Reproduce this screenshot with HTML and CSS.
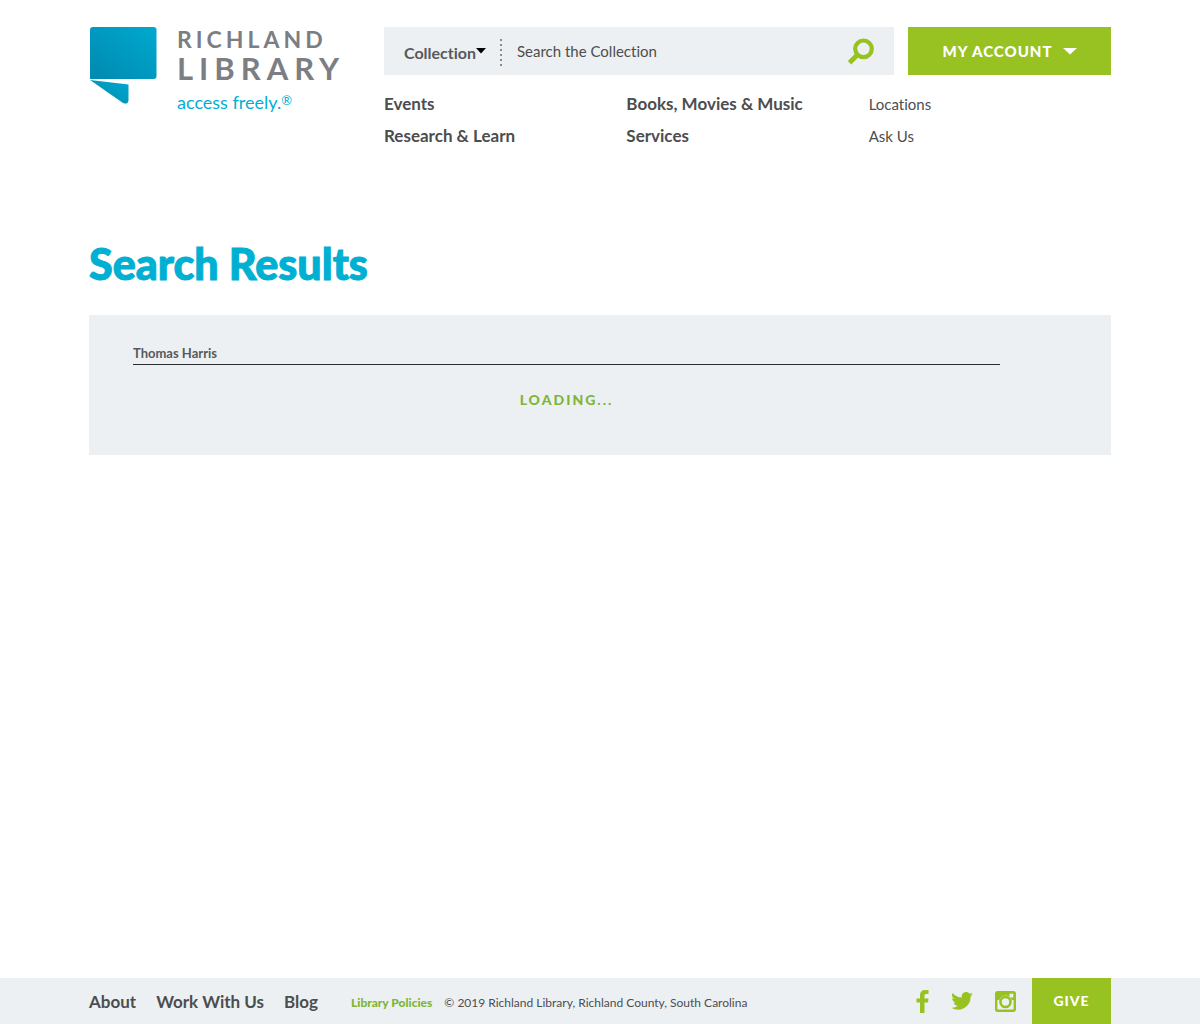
FILE: index.html
```html
<!DOCTYPE html>
<html lang="en">
<head>
<meta charset="utf-8">
<meta name="viewport" content="width=device-width, initial-scale=1">
<title>Search Results | Richland Library</title>
<link rel="stylesheet" href="styles.css">
</head>
<body>
<header class="site-header">
  <a class="logo" href="#">
    <svg class="logo-mark" viewBox="0 0 67 77" aria-hidden="true">
      <defs>
        <linearGradient id="mark" x1="1" y1="0" x2="0" y2="1">
          <stop offset="0" stop-color="#00a9cf"/>
          <stop offset="1" stop-color="#0089b0"/>
        </linearGradient>
      </defs>
      <path fill="url(#mark)" d="M3 0H63.500Q66.500 0 66.500 3V49Q66.500 52 63.500 52H0V3Q0 0 3 0Z"/>
      <path fill="url(#mark)" d="M0 53L38.500 57.500V73.500Q38 78 33 76Z"/>
    </svg>
    <span class="logo-text">
      <span class="logo-top">RICHLAND</span>
      <span class="logo-main">LIBRARY</span>
      <span class="logo-tag">access freely.<span class="logo-reg">®</span></span>
    </span>
  </a>
  <div class="header-main">
    <div class="header-bar">
      <form class="search" role="search">
        <div class="scope">
          <select class="scope-select" aria-label="Search in">
            <option>Collection</option>
            <option>Website</option>
          </select>
          <svg class="scope-caret" viewBox="0 0 10 6" aria-hidden="true"><path d="M0 0H10L5 5.500Z"/></svg>
        </div>
        <svg class="search-divider" viewBox="0 0 2 28" aria-hidden="true"><path d="M1 0V28" stroke="#8a8c8e" stroke-width="2" stroke-dasharray="2 3"/></svg>
        <input class="search-input" type="text" placeholder="Search the Collection" aria-label="Search the Collection">
        <button class="search-button" type="submit" aria-label="Search">
          <svg class="search-icon" viewBox="0 0 27 27" aria-hidden="true"><g fill="none" stroke="#98c222"><circle cx="16.500" cy="10.800" r="8.300" stroke-width="4.200"/><path d="M10.500 16.800L2.500 24.800" stroke-width="4.800"/></g></svg>
        </button>
      </form>
      <button class="account" type="button">MY ACCOUNT
        <svg class="account-caret" viewBox="0 0 14 7" aria-hidden="true"><path fill="#fff" d="M0 0H14L7 6.500Z"/></svg>
      </button>
    </div>
    <nav class="main-nav">
      <a href="#">Events</a>
      <a href="#">Books, Movies &amp; Music</a>
      <a class="nav-light" href="#">Locations</a>
      <a href="#">Research &amp; Learn</a>
      <a href="#">Services</a>
      <a class="nav-light" href="#">Ask Us</a>
    </nav>
  </div>
</header>
<main class="content">
  <h1 class="page-title">Search Results</h1>
  <section class="results">
    <input class="query" type="text" value="Thomas Harris" aria-label="Search terms">
    <p class="loading" role="status">LOADING...</p>
  </section>
</main>
<footer class="site-footer">
  <nav class="footer-nav">
    <a href="#">About</a>
    <a href="#">Work With Us</a>
    <a href="#">Blog</a>
  </nav>
  <p class="legal"><a class="policies" href="#">Library Policies</a> <span>© 2019 Richland Library, Richland County, South Carolina</span></p>
  <div class="social">
    <a href="#" aria-label="Facebook"><svg class="facebook" viewBox="0 0 12 23" aria-hidden="true"><path d="M3.500 23V12.500H0V8.500H3.500V5.500Q3.500 0 8.500 0H12V4H9.500Q8 4 8 5.500V8.500H12L11.500 12.500H8V23Z"/></svg></a>
    <a href="#" aria-label="Twitter"><svg class="twitter" viewBox="0 0 24 20" aria-hidden="true"><path d="M24 2.400a9.800 9.800 0 0 1-2.800.8A4.900 4.900 0 0 0 23.300.5a9.900 9.900 0 0 1-3.100 1.200 4.900 4.900 0 0 0-8.400 4.500A14 14 0 0 1 1.700 1.100a4.900 4.900 0 0 0 1.500 6.500 4.900 4.900 0 0 1-2.200-.6c0 2.300 1.600 4.400 3.900 4.900a5 5 0 0 1-2.200.1 4.900 4.900 0 0 0 4.600 3.400A9.900 9.900 0 0 1 0 17.400a14 14 0 0 0 21.500-12.400A10 10 0 0 0 24 2.400Z"/></svg></a>
    <a href="#" aria-label="Instagram"><svg class="instagram" viewBox="0 0 21 21" aria-hidden="true"><rect x="1.200" y="1.200" width="18.600" height="18.600" rx="1.500" fill="none" stroke="#98c222" stroke-width="2.400"/><path fill-rule="evenodd" d="M1 1H20V9H1ZM14.500 2.500V6.500H18.500V2.500Z"/><circle cx="10.500" cy="11" r="6.500" fill="#ecf0f3"/><circle cx="10.500" cy="11" r="5" fill="none" stroke="#98c222" stroke-width="2.600"/></svg></a>
  </div>
  <a class="give" href="#">GIVE</a>
</footer>
</body>
</html>
```
FILE: styles.css
```css
* {
  box-sizing: border-box;
}

body {
  margin: 0;
  min-height: 100vh;
  display: flex;
  flex-direction: column;
  background: #fff;
  color: #4c4d4f;
  font-family: Lato, "Noto Sans", sans-serif;
  font-variant-ligatures: none;
}

a {
  color: inherit;
  text-decoration: none;
}

input,
select,
button {
  margin: 0;
  padding: 0;
  border: 0;
  border-radius: 0;
  background: transparent;
  color: inherit;
  font-family: inherit;
  font-variant-ligatures: none;
}

svg {
  display: block;
  flex: none;
}

.site-header {
  display: flex;
  padding: 27px 89px 0;
}

.logo {
  display: flex;
  flex: none;
  width: 295px;
  gap: 20px;
  padding-left: 1px;
}

.logo-mark {
  width: 67px;
  height: 77px;
}

.logo-text {
  display: flex;
  flex-direction: column;
  color: #7c7e84;
  font-weight: 700;
}

.logo-top {
  font-size: 23px;
  line-height: 24px;
  letter-spacing: 4px;
}

.logo-main {
  font-size: 31px;
  line-height: 34px;
  letter-spacing: 6px;
}

.logo-tag {
  color: #00b0d3;
  font-size: 18px;
  line-height: 34px;
  font-weight: 400;
}

.logo-reg {
  font-size: 13px;
  vertical-align: 4px;
  line-height: 12px;
}

.header-main {
  flex: 1;
}

.header-bar {
  display: flex;
  gap: 14px;
  height: 48px;
}

.search {
  flex: 1;
  display: flex;
  align-items: center;
  padding: 0 20px;
  background: #ecf0f3;
}

.scope {
  position: relative;
}

.scope-select {
  width: 96px;
  height: 48px;
  padding-top: 2px;
  appearance: none;
  color: #58595b;
  font-size: 16px;
  font-weight: 700;
}

.scope-caret {
  position: absolute;
  left: 72px;
  top: 21px;
  width: 10px;
  height: 6px;
}

.search-divider {
  width: 2px;
  height: 28px;
  margin-top: 4px;
}

.search-input {
  flex: 1;
  min-width: 0;
  height: 48px;
  padding-left: 15px;
  font-size: 15px;
}

.search-input::placeholder {
  color: #4c4d4f;
  opacity: 1;
}

.search-icon {
  width: 27px;
  height: 27px;
}

.account {
  display: flex;
  align-items: center;
  justify-content: center;
  gap: 10px;
  width: 203px;
  background: #98c222;
  color: #fff;
  font-size: 15px;
  font-weight: 900;
  letter-spacing: 1px;
}

.account-caret {
  width: 14px;
  height: 7px;
}

.main-nav {
  display: grid;
  grid-template-columns: repeat(3, 1fr);
  padding-top: 13px;
  font-size: 17px;
  line-height: 32px;
  font-weight: 700;
}

.nav-light {
  font-size: 15px;
  font-weight: 400;
}

.content {
  flex: 1;
  padding: 84px 89px 40px;
}

.page-title {
  margin: 0;
  color: #00b0d3;
  font-size: 43px;
  line-height: 56px;
  font-weight: 900;
  -webkit-text-stroke: 1px #00b0d3;
}

.results {
  height: 140px;
  margin-top: 23px;
  padding: 26px 111px 0 44px;
  background: #ecf0f3;
}

.query {
  display: block;
  width: 100%;
  height: 24px;
  border-bottom: 1px solid #2b2c30;
  color: #58595b;
  font-size: 13px;
  font-weight: 700;
}

.loading {
  margin: 25px 0 0;
  color: #7fb539;
  font-size: 14px;
  line-height: 20px;
  font-weight: 900;
  letter-spacing: 2px;
  text-align: center;
}

.site-footer {
  display: flex;
  align-items: center;
  height: 46px;
  padding: 0 89px;
  background: #ecf0f3;
}

.footer-nav {
  display: flex;
  gap: 20px;
  font-size: 17px;
  font-weight: 700;
}

.legal {
  display: flex;
  gap: 12px;
  margin: 3px 0 0 33px;
  font-size: 12px;
}

.policies {
  color: #7fb539;
  font-weight: 900;
}

.social {
  display: flex;
  align-items: center;
  gap: 22px;
  margin: 0 16px 0 auto;
  fill: #98c222;
}

.facebook {
  width: 13px;
  height: 23px;
}

.twitter {
  width: 22px;
  height: 18px;
}

.instagram {
  width: 21px;
  height: 21px;
}

.give {
  align-self: stretch;
  width: 79px;
  background: #98c222;
  color: #fff;
  font-size: 14px;
  line-height: 46px;
  font-weight: 900;
  letter-spacing: 1px;
  text-align: center;
}
```
